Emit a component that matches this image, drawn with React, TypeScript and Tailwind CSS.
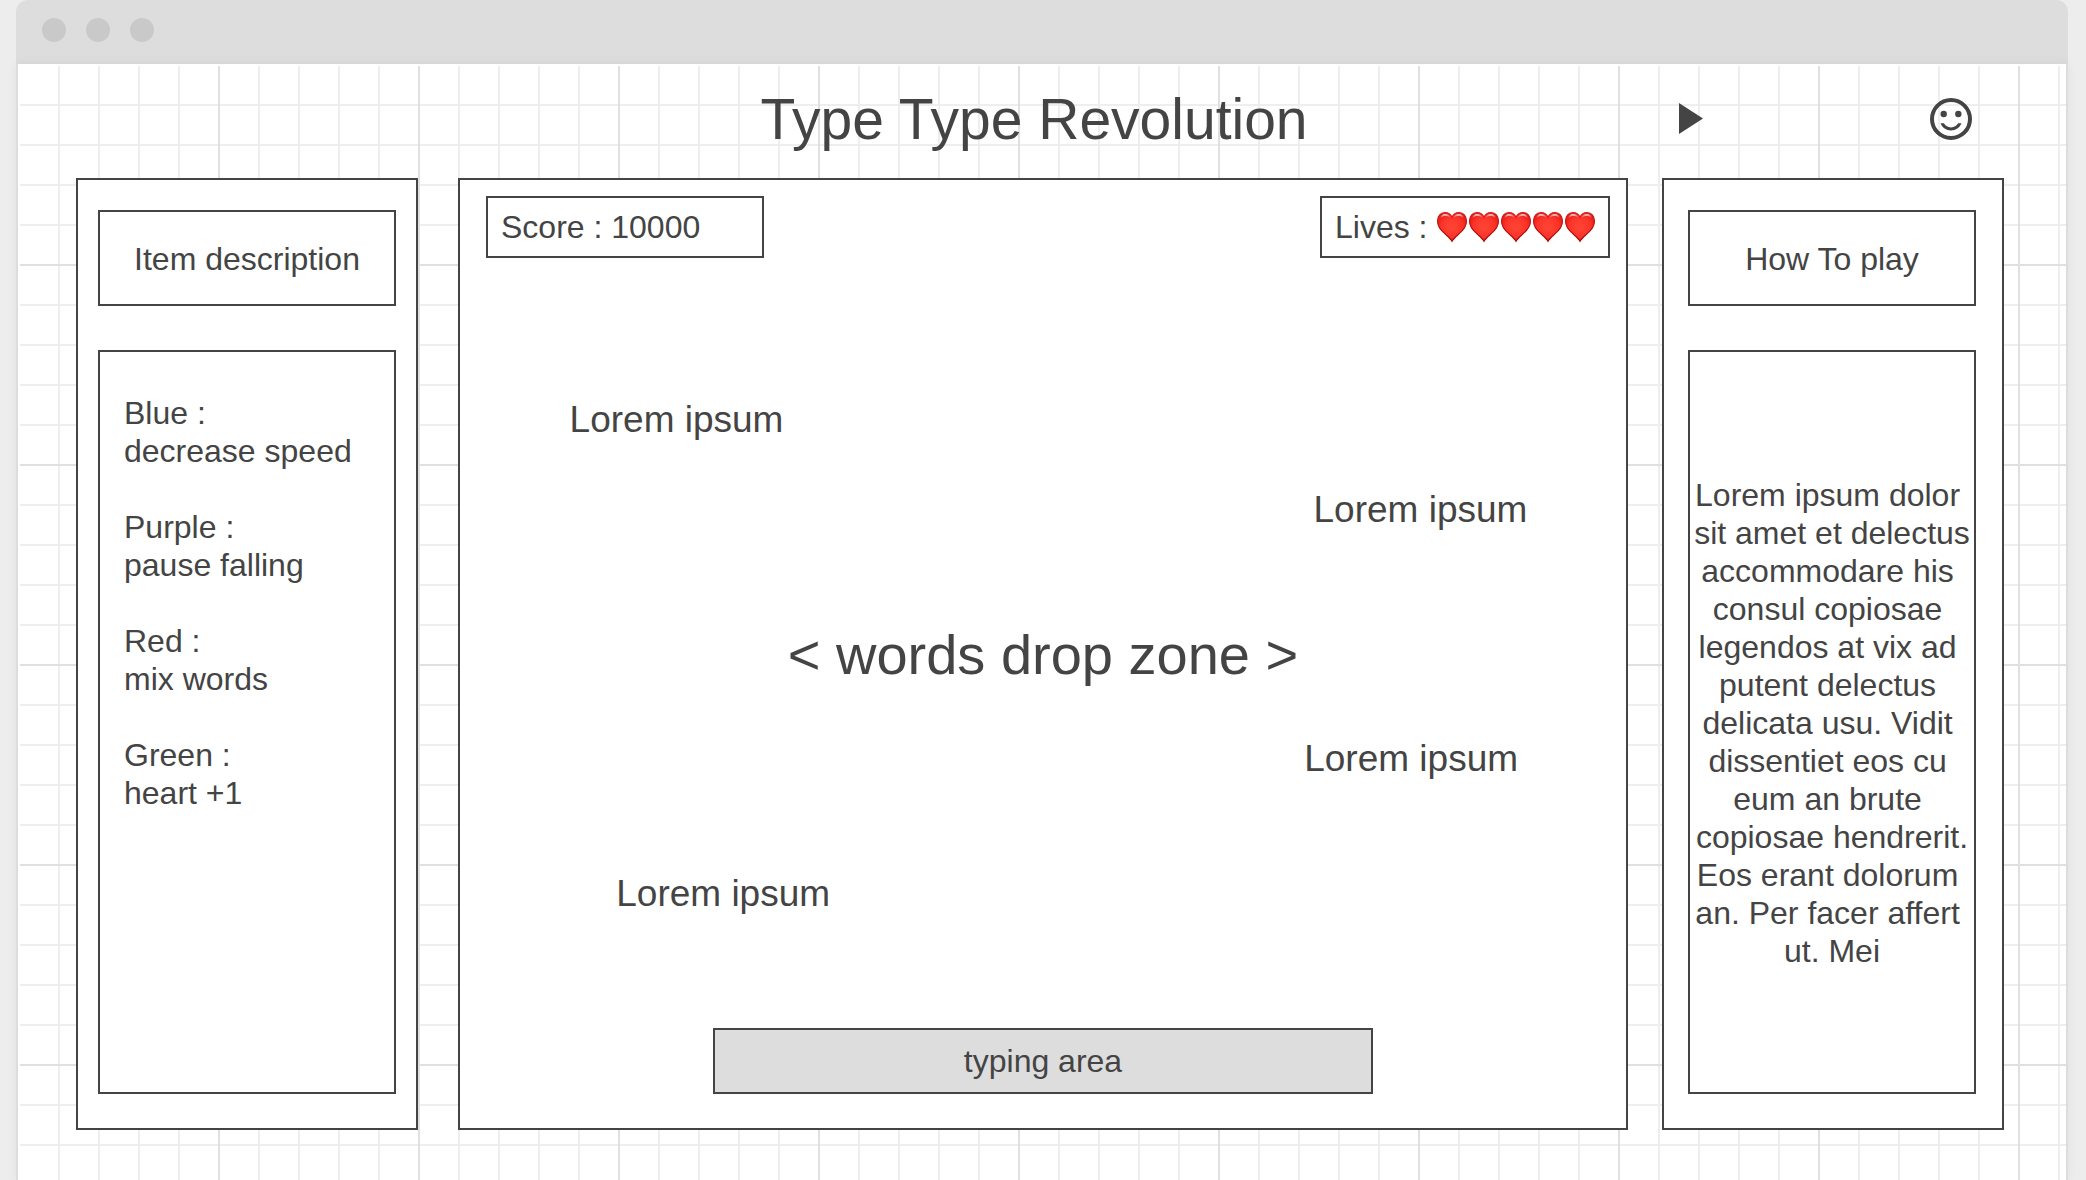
import type { ReactNode } from "react";

const powerUps = [
  { name: "Blue :", effect: "decrease speed" },
  { name: "Purple :", effect: "pause falling" },
  { name: "Red :", effect: "mix words" },
  { name: "Green :", effect: "heart +1" },
];

const instructions = [
  "Lorem ipsum dolor ",
  "sit amet et delectus",
  "accommodare his ",
  "consul copiosae ",
  "legendos at vix ad ",
  "putent delectus ",
  "delicata usu. Vidit ",
  "dissentiet eos cu ",
  "eum an brute ",
  "copiosae hendrerit.",
  "Eos erant dolorum ",
  "an. Per facer affert ",
  "ut. Mei",
].join("\n");

// Falling words, placed on the play field as a share of its size.
const fallingWords = [
  { left: "9.4%", top: "25.3%" },
  { left: "73.2%", top: "34.8%" },
  { left: "72.4%", top: "61.1%" },
  { left: "13.4%", top: "75.3%" },
];

function HeartPaints() {
  return (
    <svg className="absolute size-0" aria-hidden="true">
      <defs>
        <linearGradient id="heartEdge" x1="0" y1="0" x2="0" y2="1">
          <stop offset="0" stopColor="#d3201c" />
          <stop offset="1" stopColor="#a80508" />
        </linearGradient>
        <radialGradient id="heartFill" cx="0.5" cy="0.5" r="0.6">
          <stop offset="0" stopColor="#ff4638" />
          <stop offset="0.6" stopColor="#fc3429" />
          <stop offset="1" stopColor="#dc1716" />
        </radialGradient>
        <linearGradient id="heartShine" x1="0" y1="0" x2="0" y2="1">
          <stop offset="0" stopColor="#ffffff" stopOpacity="0.85" />
          <stop offset="1" stopColor="#ffffff" stopOpacity="0" />
        </linearGradient>
      </defs>
    </svg>
  );
}

function Heart() {
  return (
    <svg viewBox="0 0 32 32" className="size-8 shrink-0" aria-hidden="true">
      <path
        d="M16 30.2C14.6 27.600 12 25.400 8.600 22.400C4 18.400 1.500 14.900 1.500 9.900C1.500 5 4.800 1.500 9 1.500C12.200 1.500 14.700 3.300 16 6.100C17.300 3.300 19.800 1.500 23 1.500C27.200 1.500 30.500 5 30.500 9.900C30.500 14.900 28 18.400 23.400 22.400C20 25.400 17.400 27.600 16 30.200Z"
        fill="url(#heartFill)"
        stroke="url(#heartEdge)"
        strokeWidth="1.2"
      />
      <path d="M4 7.600C4.700 4.600 6.600 2.900 9.100 2.900C11.500 2.900 13.300 4.200 14.300 6.400C12.700 5.500 11 5.100 9 5.100C6.900 5.100 5.200 6 4 7.600Z" fill="url(#heartShine)" />
      <path d="M17.700 6.400C18.700 4.200 20.500 2.900 22.900 2.900C25.400 2.900 27.300 4.600 28 7.600C26.800 6 25.100 5.100 23 5.100C21 5.100 19.300 5.500 17.700 6.400Z" fill="url(#heartShine)" />
    </svg>
  );
}

function SidePanel({ title, className, children }: { title: string; className: string; children: ReactNode }) {
  return (
    <section className={`flex w-[342px] shrink-0 flex-col gap-11 border-2 border-[#444] bg-white pt-[30px] pb-[34px] ${className}`}>
      <h2 className="flex h-24 shrink-0 items-center justify-center border-2 border-[#444] pt-0.5">{title}</h2>
      {children}
    </section>
  );
}

export default function App() {
  return (
    <div className="flex min-h-screen flex-col bg-[#ededed] pr-[18px] pl-4 text-[32px] leading-[38px] text-[#444] [font-family:'Liberation_Sans',Arial,sans-serif]">
      <HeartPaints />
      <div className="flex h-16 shrink-0 items-center gap-5 rounded-t-xl bg-[#ddd] px-[26px] pb-1">
        <span className="size-6 rounded-full bg-[#c9c9c9]" />
        <span className="size-6 rounded-full bg-[#c9c9c9]" />
        <span className="size-6 rounded-full bg-[#c9c9c9]" />
      </div>

      <div className="flex grow flex-col border-x-2 border-[#ddd] bg-white pt-0.5 pl-0.5 shadow-[0_0_10px_rgba(0,0,0,0.06)]">
        <div className="flex grow flex-col bg-[linear-gradient(to_right,transparent_198px,#e0e0e0_198px),linear-gradient(to_bottom,transparent_198px,#e0e0e0_198px),linear-gradient(to_right,transparent_38px,#eeeeee_38px),linear-gradient(to_bottom,transparent_38px,#eeeeee_38px)] bg-[size:200px_200px,200px_200px,40px_40px,40px_40px] pr-[62px] pb-[50px] pl-14">
          <header className="grid h-28 shrink-0 grid-cols-[1fr_auto_1fr] items-center pb-1.5">
            <h1 className="col-start-2 pr-3 text-[57px] leading-[64px]">Type Type Revolution</h1>
            <div className="flex items-center justify-end gap-[227px] pr-8">
              <button type="button" aria-label="Play" className="flex h-8 w-6">
                <svg viewBox="0 0 24 32" className="h-8 w-6" fill="currentColor" aria-hidden="true">
                  <path d="M0 0L24 15.500L0 31Z" />
                </svg>
              </button>
              <button type="button" aria-label="Profile" className="flex size-[42px]">
                <svg viewBox="0 0 42 42" className="size-[42px]" fill="none" stroke="currentColor" aria-hidden="true">
                  <circle cx="21" cy="21" r="19" strokeWidth="4" />
                  <circle cx="13.700" cy="16" r="3.200" fill="currentColor" stroke="none" />
                  <circle cx="28.300" cy="16" r="3.200" fill="currentColor" stroke="none" />
                  <path d="M10.500 25.300H13.900C15.400 27.900 18 29.400 21 29.400C24 29.400 26.600 27.900 28.100 25.300H31.500C29.800 29.700 25.700 32.500 21 32.500C16.300 32.500 12.200 29.700 10.500 25.300Z" fill="currentColor" stroke="none" />
                </svg>
              </button>
            </div>
          </header>

          <main className="flex grow">
            <SidePanel title="Item description" className="mr-10 px-5">
              <ul className="flex grow flex-col gap-[38px] border-2 border-[#444] px-6 py-[42px]">
                {powerUps.map((item) => (
                  <li key={item.name}>
                    <p>{item.name}</p>
                    <p>{item.effect}</p>
                  </li>
                ))}
              </ul>
            </SidePanel>

            <section className="relative flex grow flex-col border-2 border-[#444] bg-white pb-[34px]">
              <div className="flex justify-between pt-4 pr-4 pl-[26px]">
                <p className="flex h-[62px] w-[278px] items-center border-2 border-[#444] px-[13px]">Score : 10000</p>
                <p className="flex h-[62px] w-[290px] items-center border-2 border-[#444] px-[13px] whitespace-pre">
                  {"Lives : "}
                  {[1, 2, 3, 4, 5].map((life) => (
                    <Heart key={life} />
                  ))}
                </p>
              </div>

              {fallingWords.map((word) => (
                <span key={word.left} className="absolute -translate-y-1/2 text-[37px] leading-[44px]" style={word}>
                  Lorem ipsum
                </span>
              ))}

              <p className="flex grow items-center justify-center pt-6 text-[56px] leading-[64px]">&lt; words drop zone &gt;</p>

              <input
                type="text"
                aria-label="typing area"
                placeholder="typing area"
                className="mx-auto h-[66px] w-[660px] shrink-0 border-2 border-[#444] bg-[#ddd] text-center outline-none placeholder:text-[#444]"
              />
            </section>

            <SidePanel title="How To play" className="ml-[34px] pr-[26px] pl-6">
              <p className="flex grow items-center justify-center border-2 border-[#444] pt-0.5 text-center whitespace-pre">{instructions}</p>
            </SidePanel>
          </main>
        </div>
      </div>
    </div>
  );
}
